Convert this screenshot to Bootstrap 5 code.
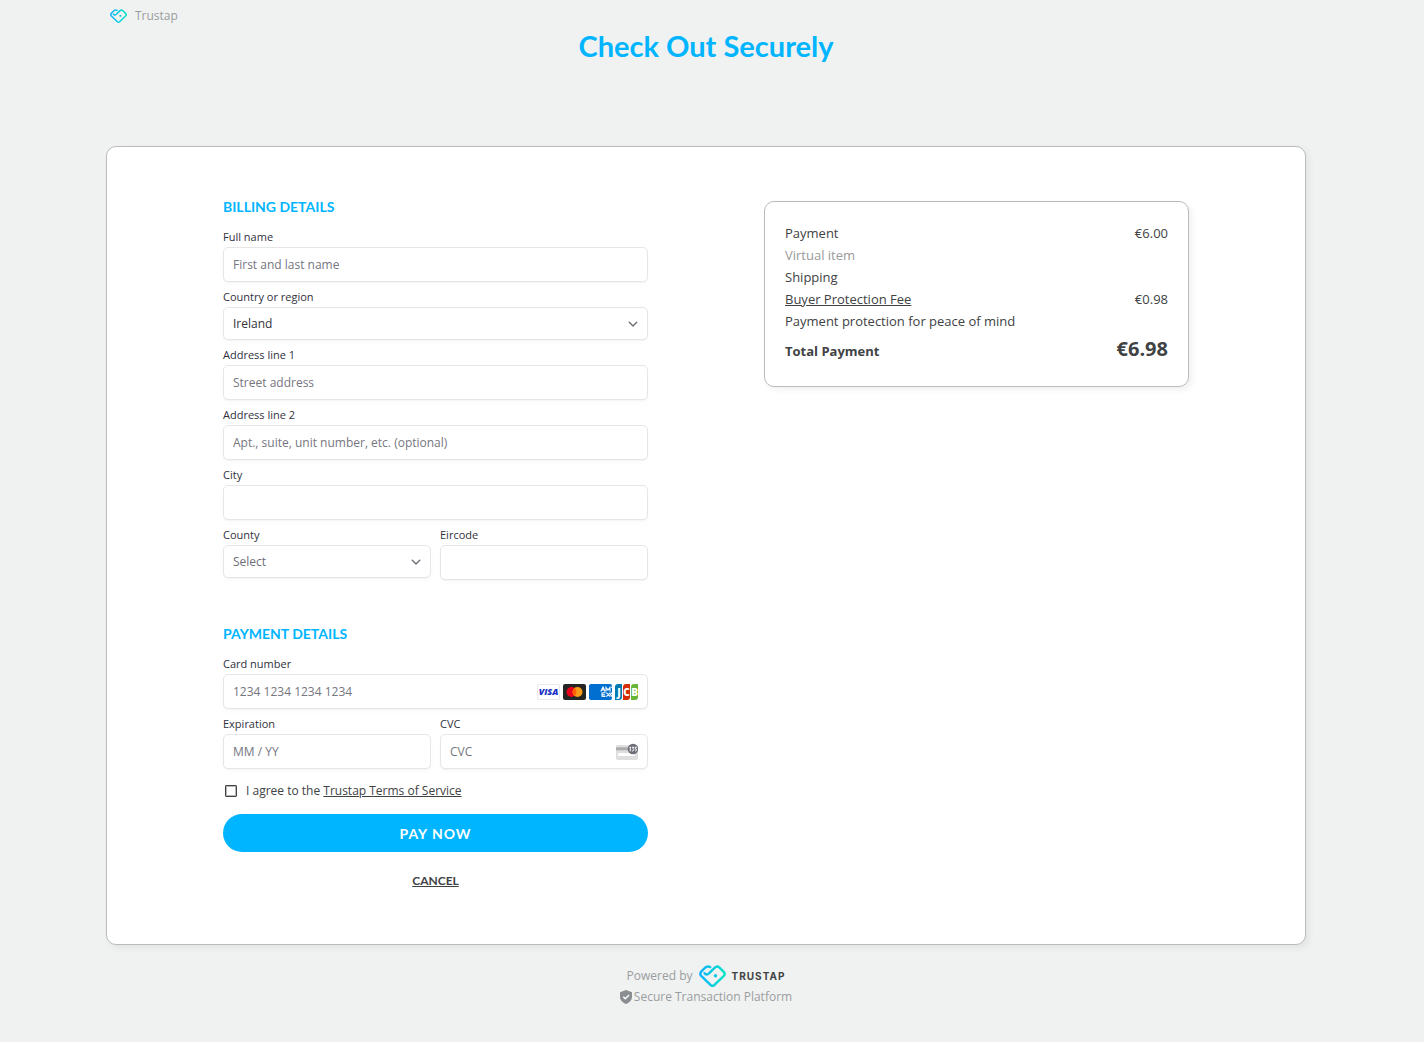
<!DOCTYPE html>
<html lang="en">
<head>
<meta charset="utf-8">
<meta name="viewport" content="width=device-width, initial-scale=1">
<title>Trustap – Check Out Securely</title>
<link href="https://cdn.jsdelivr.net/npm/bootstrap@5.3.0/dist/css/bootstrap.min.css" rel="stylesheet">
<style>
  :root { --brand: #00b5ff; --ink: #404244; --soft: #9a9da0; }
  body { background: #f0f2f1; color: var(--ink); font-family: "Open Sans", "Noto Sans", sans-serif; font-size: 13px; line-height: 22px; padding-right: 12px; }
  .page-shell { max-width: 1200px; margin: 0 auto; }
  .top-brand { height: 32px; padding-left: 4px; color: var(--soft); font-size: 12px; }
  .page-title { color: var(--brand); font-family: Lato, sans-serif; font-size: 29px; font-weight: 700; line-height: 28px; margin-bottom: 86px; }
  .panel { background: #fff; border: 1px solid #b9bbbc; border-radius: 10px; box-shadow: 3px 3px 6px rgba(0,0,0,.06); }
  .checkout { padding: 49px 58px 54px; }
  .pane { padding: 0 58px; }
  .section-title { color: var(--brand); font-family: Lato, sans-serif; font-size: 14px; font-weight: 700; line-height: 22px; margin-bottom: 11px; }
  .field-label { display: block; font-size: 11px; line-height: 16px; margin-bottom: 2px; color: #30313d; }
  .field { margin-bottom: 7px; }
  .field .form-control, .field .form-select { height: 35px; padding: 0 9px; font-size: 12px; line-height: 18px; color: #30313d; border: 1px solid #e6e6e6; border-radius: 5px; box-shadow: 0 1px 1px rgba(0,0,0,.03), 0 3px 6px rgba(0,0,0,.02); }
  .field .form-control::placeholder { color: #757680; }
  .field .form-select { height: 33px; background-size: 10px 10px; background-position: right 9px center;
    background-image: url("data:image/svg+xml,%3csvg xmlns='http://www.w3.org/2000/svg' viewBox='0 0 10 10'%3e%3cpath d='M1.3 3.3 5 7l3.7-3.7' fill='none' stroke='%236d6e78' stroke-width='1.4' stroke-linecap='round' stroke-linejoin='round'/%3e%3c/svg%3e"); }
  .field .unset { color: #6d6e78; }
  .row-pair { --bs-gutter-x: 9px; }
  .input-art { position: absolute; right: 10px; top: 0; height: 35px; pointer-events: none; }
  .payment { margin-top: 36px; }
  .terms { font-size: 12px; line-height: 18px; margin-top: 6px; padding-left: 2px; gap: 9px; }
  .terms .form-check-input { width: 12px; height: 12px; margin: 0; border: 1px solid var(--ink); border-radius: 1px; box-shadow: inset 0 0 0 1px #b5b6b8; }
  .ink-link { color: var(--ink); text-decoration: underline; }
  .pay-btn { background: var(--brand); color: #fff; border: 0; border-radius: 19px; height: 38px; font-family: Lato, sans-serif; font-size: 14px; font-weight: 700; letter-spacing: 1px; margin-top: 14px; }
  .pay-btn:hover { background: #00a5e8; color: #fff; }
  .cancel { font-family: Lato, sans-serif; font-size: 12px; font-weight: 700; line-height: 18px; margin-top: 20px; }
  .summary { padding: 20px 20px 21px; margin-top: 5px; }
  .total { margin-top: 3px; line-height: 28px; }
  .total-sum { font-size: 20px; }
  .muted { color: #9a9a9a; }
  .site-foot { color: var(--soft); font-size: 12px; padding: 20px 0; line-height: 20px; }
  .powered { gap: 6px; }
  .secure { gap: 2px; }
  .wordmark { color: #404244; font-family: Inter, sans-serif; font-size: 10px; font-weight: 700; letter-spacing: 1px; }
</style>
</head>
<body>
<svg width="0" height="0" class="position-absolute" aria-hidden="true">
  <defs>
    <linearGradient id="tg" x1="0" y1="0" x2="1" y2="0"><stop offset="0" stop-color="#0ab4ff"/><stop offset="1" stop-color="#05e3c4"/></linearGradient>
    <symbol id="heart" viewBox="0 0 27 22">
      <path d="M5.500 8.200C6.800 10.200 8.600 9.600 10 8.300L15.600 2.800q2.400-2.300 4.900-.2l4.200 4.200q2 2.100 0 4.200L15.200 20.100q-1.700 1.500-3.400 0L2.200 10.900q-1.800-2.100 0-4.200L5.800 3q2.600-2.400 5.400-.9" fill="none" stroke="url(#tg)" stroke-width="2.400" stroke-linecap="round" stroke-linejoin="round"/>
      <circle cx="16.500" cy="10.700" r="1.700" fill="#0cc9e6"/>
    </symbol>
  </defs>
</svg>
<div class="page-shell">
  <header>
    <div class="top-brand d-flex align-items-center gap-2"><svg width="17" height="14" aria-hidden="true"><use href="#heart"/></svg><span>Trustap</span></div>
    <h1 class="page-title text-center">Check Out Securely</h1>
  </header>
  <main class="panel checkout">
    <div class="row g-0">
      <form class="col-lg-6 pane">
        <h2 class="section-title">BILLING DETAILS</h2>
        <div class="field"><label class="field-label" for="name">Full name</label><input class="form-control" id="name" placeholder="First and last name"></div>
        <div class="field"><label class="field-label" for="country">Country or region</label><select class="form-select" id="country"><option>Ireland</option></select></div>
        <div class="field"><label class="field-label" for="a1">Address line 1</label><input class="form-control" id="a1" placeholder="Street address"></div>
        <div class="field"><label class="field-label" for="a2">Address line 2</label><input class="form-control" id="a2" placeholder="Apt., suite, unit number, etc. (optional)"></div>
        <div class="field"><label class="field-label" for="city">City</label><input class="form-control" id="city"></div>
        <div class="row row-pair">
          <div class="col-6 field"><label class="field-label" for="county">County</label><select class="form-select unset" id="county"><option>Select</option></select></div>
          <div class="col-6 field"><label class="field-label" for="eir">Eircode</label><input class="form-control" id="eir"></div>
        </div>
        <section class="payment">
          <h2 class="section-title">PAYMENT DETAILS</h2>
          <div class="field"><label class="field-label" for="card">Card number</label>
            <div class="position-relative"><input class="form-control" id="card" placeholder="1234 1234 1234 1234">
              <div class="input-art d-flex align-items-center">
                <svg width="101" height="16" viewBox="0 0 101 16" role="img" aria-label="Visa, Mastercard, American Express, JCB">
                  <rect x=".5" y=".5" width="22" height="15" rx="1.500" fill="#fff" stroke="#e8e8ee"/>
                  <text x="11.500" y="11.300" text-anchor="middle" font-family="Open Sans, sans-serif" font-size="9" font-weight="800" font-style="italic" fill="#1a2fc4">VISA</text>
                  <rect x="26" width="23" height="16" rx="2" fill="#252525"/>
                  <circle cx="34.500" cy="8" r="5" fill="#eb001b"/><circle cx="40.500" cy="8" r="5" fill="#f79e1b"/><path d="M37.500 4a5 5 0 0 1 0 8 5 5 0 0 1 0-8" fill="#ff5f00"/>
                  <rect x="52" width="23" height="16" rx="2" fill="#016fd0"/>
                  <g fill="none" stroke="#fff" stroke-width="1.100"><path d="M63.800 7.500 66 3l2 4.500M64.600 6h2.600M69 7.500V3.300l2 2.700 2-2.700v4.200M75 3.300h-1M65 8.500v4.200M65.500 8.800h3M65.500 10.700h2.500M65.500 12.400h3M69.300 8.600l4 4M73.300 8.600l-4 4M75 8.600l-1.500 2 1.500 2"/></g>
                  <path d="M78 3a3 3 0 0 1 3-3h4v13a3 3 0 0 1-3 3h-4z" fill="#047ab1"/><path d="M86 3a3 3 0 0 1 3-3h4v13a3 3 0 0 1-3 3h-4z" fill="#d42d06"/><path d="M94 3a3 3 0 0 1 3-3h4v13a3 3 0 0 1-3 3h-4z" fill="#67b637"/>
                  <g font-family="Open Sans, sans-serif" font-size="10" font-weight="800" fill="#fff" text-anchor="middle"><text x="82" y="11.500">J</text><text x="89.500" y="11.500">C</text><text x="97.500" y="11.500">B</text></g>
                </svg>
              </div></div></div>
          <div class="row row-pair">
            <div class="col-6 field"><label class="field-label" for="exp">Expiration</label><input class="form-control" id="exp" placeholder="MM / YY"></div>
            <div class="col-6 field"><label class="field-label" for="cvc">CVC</label>
              <div class="position-relative"><input class="form-control" id="cvc" placeholder="CVC">
                <div class="input-art d-flex align-items-center">
                  <svg width="22" height="18" viewBox="0 0 22 18" aria-hidden="true"><rect y="2" width="22" height="15" rx="2" fill="#dededf"/><path d="M0 4.300h13v3H0z" fill="#adadb0"/><rect x="2" y="10" width="17" height="3" rx="1" fill="#fff"/><circle cx="17" cy="6" r="5.300" fill="#6d6e78"/><path d="M13.500 4.500l.8-.5v4.300M15.800 4.200h2l-1 1.600c1.600.1 1.300 2.400-.9 2.200M21 4.200h-1.700v1.700c1.900-.2 1.700 2.400-.2 2.100" fill="none" stroke="#fff" stroke-width="1"/></svg>
                </div></div></div>
          </div>
        </section>
        <div class="terms d-flex align-items-center"><input class="form-check-input" type="checkbox" id="agree"><label for="agree">I agree to the <a class="ink-link" href="#">Trustap Terms of Service</a></label></div>
        <button type="submit" class="btn pay-btn w-100">PAY NOW</button>
        <div class="cancel text-center"><a class="ink-link" href="#">CANCEL</a></div>
      </form>
      <aside class="col-lg-6 pane">
        <div class="panel summary">
          <div class="d-flex justify-content-between"><span>Payment</span><span>€6.00</span></div>
          <div class="muted">Virtual item</div>
          <div>Shipping</div>
          <div class="d-flex justify-content-between"><a class="ink-link" href="#">Buyer Protection Fee</a><span>€0.98</span></div>
          <div>Payment protection for peace of mind</div>
          <div class="total d-flex justify-content-between align-items-baseline fw-bold"><span>Total Payment</span><span class="total-sum">€6.98</span></div>
        </div>
      </aside>
    </div>
  </main>
  <footer class="site-foot">
    <div class="powered d-flex justify-content-center align-items-center"><span>Powered by</span><svg width="27" height="22" aria-hidden="true"><use href="#heart"/></svg><span class="wordmark">TRUSTAP</span></div>
    <div class="secure d-flex justify-content-center align-items-center"><svg width="12" height="14" viewBox="0 0 12 14" aria-hidden="true"><path d="M6 0l6 2.200v4.600c0 3.400-2.600 6-6 7.200-3.400-1.200-6-3.800-6-7.200V2.200z" fill="#8b8e91"/><path d="M3.300 6.800l2 2L9 5.100" fill="none" stroke="#fff" stroke-width="1.400"/></svg><span>Secure Transaction Platform</span></div>
  </footer>
</div>
<script src="https://cdn.jsdelivr.net/npm/bootstrap@5.3.0/dist/js/bootstrap.bundle.min.js"></script>
</body>
</html>
